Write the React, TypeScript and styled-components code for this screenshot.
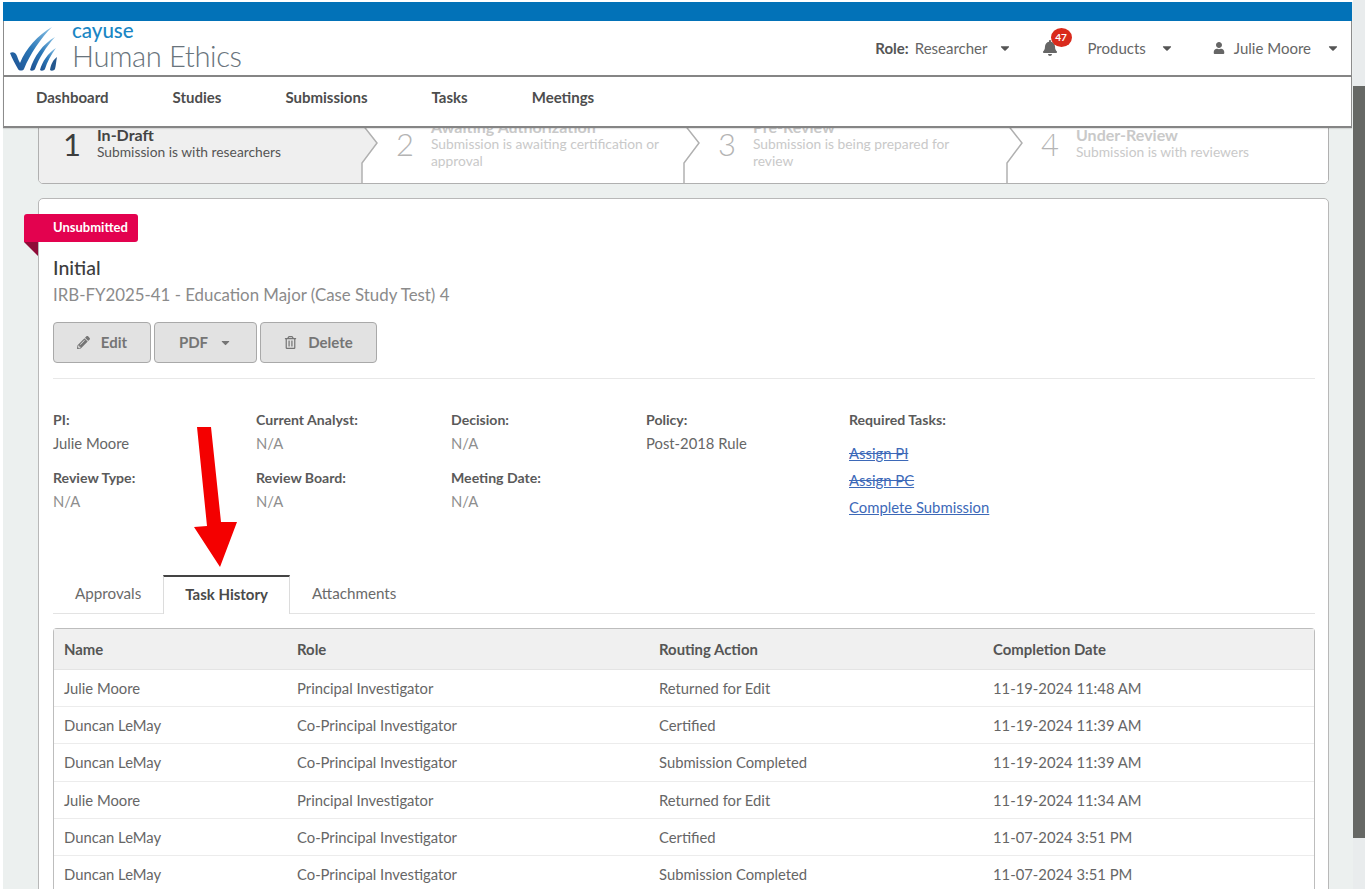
import React from 'react';
import styled, { createGlobalStyle } from 'styled-components';
import { FaBell, FaCaretDown, FaPencilAlt, FaRegTrashAlt, FaUser } from 'react-icons/fa';

const GlobalStyle = createGlobalStyle`
  html, body {
    margin: 0;
    padding: 0;
    background: #fff;
    overflow: hidden;
  }
  * {
    box-sizing: border-box;
  }
  body {
    font-family: Lato, "Open Sans", sans-serif;
    font-size: 14px;
    color: #666;
  }
`;

const Page = styled.div`
  display: flex;
  width: 1368px;
  height: 889px;
  padding: 2px 0 0 3px;
  overflow: hidden;
  background: #fff;
`;

const Frame = styled.div`
  display: flex;
  flex-direction: column;
  width: 1350px;
  height: 887px;
  background: #ecf0ef;
`;

const Scrollbar = styled.div`
  width: 12px;
  margin-top: -2px;
  flex: none;
  background: #e9eced;
  padding-top: 86px;
`;

const ScrollThumb = styled.div`
  height: 752px;
  background: #666865;
`;

const TopStrip = styled.div`
  position: relative;
  z-index: 2;
  flex: none;
  margin-right: 1px;
`;

const BlueBar = styled.div`
  height: 19px;
  background: #0272b8;
`;

const Brand = styled.header`
  display: flex;
  align-items: center;
  height: 56px;
  padding-left: 6px;
  background: #fff;
  border-left: 1px solid #8c8c8c;
  border-right: 1px solid #8c8c8c;
  border-bottom: 2px solid #858585;
`;

const LogoMark = styled.svg`
  width: 48px;
  height: 46px;
  flex: none;
  margin-top: 2px;
`;

const LogoText = styled.div`
  display: flex;
  flex-direction: column;
  margin-left: 14px;
`;

const Cayuse = styled.span`
  font-size: 20.5px;
  line-height: 17px;
  font-weight: 500;
  color: #1a86c4;
  margin-top: -3px;
`;

const ProductName = styled.span`
  font-size: 29.2px;
  line-height: 30px;
  font-weight: 300;
  color: #69747c;
  letter-spacing: -0.4px;
  margin-top: 2px;
`;

const HeaderMenu = styled.div`
  display: flex;
  align-items: center;
  margin-left: auto;
  padding-right: 11px;
  color: #666;
  font-size: 15px;
`;

const MenuItem = styled.span<{ $gap: number }>`
  display: flex;
  align-items: center;
  margin-left: ${(p) => p.$gap}px;
`;

const RoleLabel = styled.b`
  font-weight: 700;
  color: #555;
  margin-right: 6px;
`;

const Caret = styled(FaCaretDown)<{ $left: number }>`
  margin-left: ${(p) => p.$left}px;
  font-size: 14px;
  color: #555;
`;

const BellWrap = styled.span`
  position: relative;
  display: flex;
  margin-left: 30px;
  color: #666;
  font-size: 16px;
`;

const Badge = styled.span`
  position: absolute;
  top: -12px;
  left: 9px;
  width: 21px;
  height: 19px;
  border-radius: 50%;
  background: #d92a1c;
  color: #fff;
  font-size: 10px;
  font-weight: 700;
  line-height: 19px;
  text-align: center;
`;

const UserGlyph = styled(FaUser)`
  font-size: 12px;
  color: #666;
  margin-right: 9px;
`;

const Nav = styled.nav`
  display: flex;
  align-items: center;
  gap: 64px;
  height: 51px;
  padding: 0 0 9px 32px;
  background: #fff;
  border-left: 1px solid #8c8c8c;
  border-right: 1px solid #8c8c8c;
  border-bottom: 2px solid #858585;
  box-shadow: 0 1px 1px rgba(0, 0, 0, 0.1);
`;

const NavLink = styled.a`
  font-size: 15px;
  font-weight: 700;
  color: #4d4d4d;
`;

const Content = styled.main`
  position: relative;
  z-index: 1;
  flex: 1;
  min-height: 0;
  margin-top: -14px;
  padding: 0 24px 0 35px;
`;

const Stepper = styled.div`
  display: grid;
  grid-template-columns: 323px 322px 323px 1fr;
  height: 70px;
  background: #fff;
  border: 1.5px solid #b0b0b0;
  border-radius: 0 0 5px 5px;
  overflow: hidden;
`;

const Step = styled.div<{ $active?: boolean }>`
  position: relative;
  display: flex;
  align-items: center;
  padding: 0 0 11px ${(p) => (p.$active ? 24 : 34)}px;
  background: ${(p) => (p.$active ? '#efefef' : '#fff')};
`;

const StepNumber = styled.span<{ $active?: boolean }>`
  flex: none;
  width: ${(p) => (p.$active ? 34 : 35)}px;
  font-size: 31px;
  font-weight: ${(p) => (p.$active ? 400 : 300)};
  line-height: 36px;
  color: ${(p) => (p.$active ? '#3d3d3d' : '#b4b4b4')};
`;

const StepText = styled.div`
  width: 236px;
`;

const StepTitle = styled.div<{ $active?: boolean }>`
  font-size: 16px;
  line-height: 17px;
  font-weight: 700;
  color: ${(p) => (p.$active ? '#444' : '#c9c9c9')};
`;

const StepDesc = styled.div<{ $active?: boolean }>`
  font-size: 13.8px;
  line-height: 17.5px;
  color: ${(p) => (p.$active ? '#555' : '#c9c9c9')};
`;

const Chevron = styled.svg`
  position: absolute;
  top: 0;
  right: -17px;
  width: 18px;
  height: 70px;
  z-index: 1;
`;

const Card = styled.section`
  position: relative;
  margin-top: 14px;
  height: 720px;
  padding: 57px 13px 0 14px;
  background: #fff;
  border: 1.5px solid #b8b8b8;
  border-radius: 5px;
`;

const Ribbon = styled.div`
  position: absolute;
  top: 15px;
  left: -15px;
  width: 114px;
  height: 28px;
  padding-left: 29px;
  background: #e3024f;
  border-radius: 3px 3px 3px 0;
  color: #fff;
  font-size: 13px;
  font-weight: 700;
  line-height: 27px;
`;

const RibbonFold = styled.span`
  position: absolute;
  top: 28px;
  left: 0;
  border-top: 14px solid #8f0c38;
  border-left: 14px solid transparent;
`;

const Title = styled.h1`
  margin: 0;
  font-size: 19.5px;
  font-weight: 500;
  line-height: 24px;
  color: #3d3d3d;
`;

const Subtitle = styled.div`
  margin-top: 4px;
  font-size: 16.85px;
  line-height: 22px;
  color: #8b8b8b;
`;

const Actions = styled.div`
  display: flex;
  gap: 3px;
  margin-top: 16px;
  padding-bottom: 15px;
  border-bottom: 1px solid #e8e8e8;
`;

const ActionButton = styled.button<{ $width: number }>`
  display: flex;
  align-items: center;
  justify-content: center;
  gap: 11px;
  width: ${(p) => p.$width}px;
  height: 41px;
  padding-bottom: 2px;
  background: #e2e2e2;
  border: 1px solid #a9a9a9;
  border-radius: 4px;
  color: #757575;
  font-family: inherit;
  font-size: 15px;
  font-weight: 700;
  svg {
    font-size: 13px;
  }
`;

const InfoGrid = styled.div`
  display: grid;
  grid-template-columns: 203px 195px 195px 203px 1fr;
  row-gap: 11px;
  margin-top: 32px;
`;

const Field = styled.div`
  display: flex;
  flex-direction: column;
  gap: 5px;
  line-height: 18px;
`;

const FieldLabel = styled.span`
  font-size: 14.1px;
  font-weight: 700;
  color: #5a5a5a;
`;

const FieldValue = styled.span<{ $muted?: boolean }>`
  font-size: 14.8px;
  color: ${(p) => (p.$muted ? '#8e8e8e' : '#666')};
`;

const TasksField = styled(Field)`
  grid-column: 5;
  grid-row: 1 / span 2;
`;

const TaskList = styled.div`
  display: flex;
  flex-direction: column;
  gap: 9px;
  margin-top: 10px;
`;

const TaskLink = styled.a<{ $done?: boolean }>`
  font-size: 14.85px;
  color: #3d69b8;
  text-decoration: ${(p) => (p.$done ? 'underline line-through' : 'underline')};
`;

const TabRow = styled.div`
  display: flex;
  margin-top: 59px;
  height: 39px;
  border-bottom: 1px solid #e3e3e3;
`;

const Tab = styled.div<{ $active?: boolean }>`
  height: ${(p) => (p.$active ? 39 : 38)}px;
  padding: ${(p) => (p.$active ? '8px 21px 0' : '9px 22px 0')};
  font-size: ${(p) => (p.$active ? 15 : 15.2)}px;
  line-height: 18px;
  font-weight: ${(p) => (p.$active ? 700 : 400)};
  color: ${(p) => (p.$active ? '#4a4a4a' : '#6a6a6a')};
  background: #fff;
  ${(p) =>
    p.$active
      ? `border-top: 2.5px solid #444;
         border-left: 1px solid #dcdcdc;
         border-right: 1px solid #dcdcdc;`
      : ''}
`;

const Table = styled.table`
  width: 100%;
  margin-top: 14px;
  border-collapse: separate;
  border-spacing: 0;
  table-layout: fixed;
  border-top: 1.5px solid #bdbdbd;
  border-left: 1.5px solid #bdbdbd;
  border-right: 1.5px solid #bdbdbd;
  border-radius: 4px 4px 0 0;
`;

const HeadCell = styled.th<{ $width?: number }>`
  ${(p) => (p.$width ? `width: ${p.$width}px;` : '')}
  height: 41px;
  padding: 0 0 0 10px;
  text-align: left;
  font-size: 14.9px;
  font-weight: 700;
  color: #555;
  background: #f0f0f0;
  border-bottom: 1px solid #e4e4e4;
`;

const Cell = styled.td`
  height: 37.2px;
  padding: 0 0 0 10px;
  font-size: 14.8px;
  color: #666;
  border-bottom: 1.5px solid #ececec;
`;

const ArrowMark = styled.svg`
  position: absolute;
  top: 228px;
  left: 155px;
  width: 45px;
  height: 141px;
  z-index: 3;
`;

const steps = [
  { n: '1', title: 'In-Draft', desc: 'Submission is with researchers' },
  { n: '2', title: 'Awaiting Authorization', desc: 'Submission is awaiting certification or approval' },
  { n: '3', title: 'Pre-Review', desc: 'Submission is being prepared for review' },
  { n: '4', title: 'Under-Review', desc: 'Submission is with reviewers' },
];

const rows = [
  ['Julie Moore', 'Principal Investigator', 'Returned for Edit', '11-19-2024 11:48 AM'],
  ['Duncan LeMay', 'Co-Principal Investigator', 'Certified', '11-19-2024 11:39 AM'],
  ['Duncan LeMay', 'Co-Principal Investigator', 'Submission Completed', '11-19-2024 11:39 AM'],
  ['Julie Moore', 'Principal Investigator', 'Returned for Edit', '11-19-2024 11:34 AM'],
  ['Duncan LeMay', 'Co-Principal Investigator', 'Certified', '11-07-2024 3:51 PM'],
  ['Duncan LeMay', 'Co-Principal Investigator', 'Submission Completed', '11-07-2024 3:51 PM'],
];

const Logo = () => (
  <LogoMark viewBox="0 0 48 46">
    <defs>
      <linearGradient id="logoBlue" x1="0" y1="1" x2="1" y2="0">
        <stop offset="0" stopColor="#1d4f8f" />
        <stop offset="0.5" stopColor="#2b78b8" />
        <stop offset="1" stopColor="#8cc3e6" />
      </linearGradient>
    </defs>
    <path
      fill="url(#logoBlue)"
      d="M0 27C3 25 6 27 7 30C8 33 9 35 10 37C16 22 28 9 42 1C31 12 20 28 14 43C13 45 9 45 8 43C5 38 2 32 0 27Z"
    />
    <path fill="url(#logoBlue)" d="M20 44C24 30 33 18 45 11C36 21 29 32 25 43C24 45 21 45 20 44Z" />
    <path fill="url(#logoBlue)" d="M30 44C32 36 38 27 46 22C41 29 37 36 35 43C34 45 31 45 30 44Z" />
    <path fill="#24588f" d="M40 44C41 38 43 34 47 31C46 36 46 39 45 43C44 45 41 45 40 44Z" />
  </LogoMark>
);

const App: React.FC = () => (
  <Page>
    <GlobalStyle />
    <Frame>
      <TopStrip>
        <BlueBar />
        <Brand>
          <Logo />
          <LogoText>
            <Cayuse>cayuse</Cayuse>
            <ProductName>Human Ethics</ProductName>
          </LogoText>
          <HeaderMenu>
            <MenuItem $gap={0}>
              <RoleLabel>Role:</RoleLabel>
              Researcher
              <Caret $left={10} />
            </MenuItem>
            <BellWrap>
              <FaBell />
              <Badge>47</Badge>
            </BellWrap>
            <MenuItem $gap={30}>
              Products
              <Caret $left={14} />
            </MenuItem>
            <MenuItem $gap={39}>
              <UserGlyph />
              Julie Moore
              <Caret $left={15} />
            </MenuItem>
          </HeaderMenu>
        </Brand>
        <Nav>
          <NavLink>Dashboard</NavLink>
          <NavLink>Studies</NavLink>
          <NavLink>Submissions</NavLink>
          <NavLink>Tasks</NavLink>
          <NavLink>Meetings</NavLink>
        </Nav>
      </TopStrip>
      <Content>
        <Stepper>
          {steps.map((s, i) => (
            <Step key={s.n} $active={i === 0}>
              <StepNumber $active={i === 0}>{s.n}</StepNumber>
              <StepText>
                <StepTitle $active={i === 0}>{s.title}</StepTitle>
                <StepDesc $active={i === 0}>{s.desc}</StepDesc>
              </StepText>
              {i < 3 && (
                <Chevron viewBox="0 0 18 70">
                  <path d="M1 9L16 28L1 48V70H0V0H1Z" fill={i === 0 ? '#efefef' : '#fff'} />
                  <path d="M1 0V9L16 28L1 48V70" fill="none" stroke="#b0b0b0" strokeWidth="1.5" />
                </Chevron>
              )}
            </Step>
          ))}
        </Stepper>
        <Card>
          <Ribbon>
            Unsubmitted
            <RibbonFold />
          </Ribbon>
          <Title>Initial</Title>
          <Subtitle>IRB-FY2025-41 - Education Major (Case Study Test) 4</Subtitle>
          <Actions>
            <ActionButton $width={98}>
              <FaPencilAlt />
              Edit
            </ActionButton>
            <ActionButton $width={103}>
              PDF
              <FaCaretDown />
            </ActionButton>
            <ActionButton $width={117}>
              <FaRegTrashAlt />
              Delete
            </ActionButton>
          </Actions>
          <InfoGrid>
            <Field>
              <FieldLabel>PI:</FieldLabel>
              <FieldValue>Julie Moore</FieldValue>
            </Field>
            <Field>
              <FieldLabel>Current Analyst:</FieldLabel>
              <FieldValue $muted>N/A</FieldValue>
            </Field>
            <Field>
              <FieldLabel>Decision:</FieldLabel>
              <FieldValue $muted>N/A</FieldValue>
            </Field>
            <Field>
              <FieldLabel>Policy:</FieldLabel>
              <FieldValue>Post-2018 Rule</FieldValue>
            </Field>
            <TasksField>
              <FieldLabel>Required Tasks:</FieldLabel>
              <TaskList>
                <TaskLink $done>Assign PI</TaskLink>
                <TaskLink $done>Assign PC</TaskLink>
                <TaskLink>Complete Submission</TaskLink>
              </TaskList>
            </TasksField>
            <Field>
              <FieldLabel>Review Type:</FieldLabel>
              <FieldValue $muted>N/A</FieldValue>
            </Field>
            <Field>
              <FieldLabel>Review Board:</FieldLabel>
              <FieldValue $muted>N/A</FieldValue>
            </Field>
            <Field>
              <FieldLabel>Meeting Date:</FieldLabel>
              <FieldValue $muted>N/A</FieldValue>
            </Field>
          </InfoGrid>
          <TabRow>
            <Tab>Approvals</Tab>
            <Tab $active>Task History</Tab>
            <Tab>Attachments</Tab>
          </TabRow>
          <Table>
            <thead>
              <tr>
                <HeadCell $width={233}>Name</HeadCell>
                <HeadCell $width={362}>Role</HeadCell>
                <HeadCell $width={334}>Routing Action</HeadCell>
                <HeadCell>Completion Date</HeadCell>
              </tr>
            </thead>
            <tbody>
              {rows.map((r, i) => (
                <tr key={i}>
                  {r.map((c) => (
                    <Cell key={c}>{c}</Cell>
                  ))}
                </tr>
              ))}
            </tbody>
          </Table>
          <ArrowMark viewBox="0 0 45 141">
            <path d="M3 0H17L27 95L43 95L26 140L0 100L13 99Z" fill="#f40000" />
          </ArrowMark>
        </Card>
      </Content>
    </Frame>
    <Scrollbar>
      <ScrollThumb />
    </Scrollbar>
  </Page>
);

export default App;
